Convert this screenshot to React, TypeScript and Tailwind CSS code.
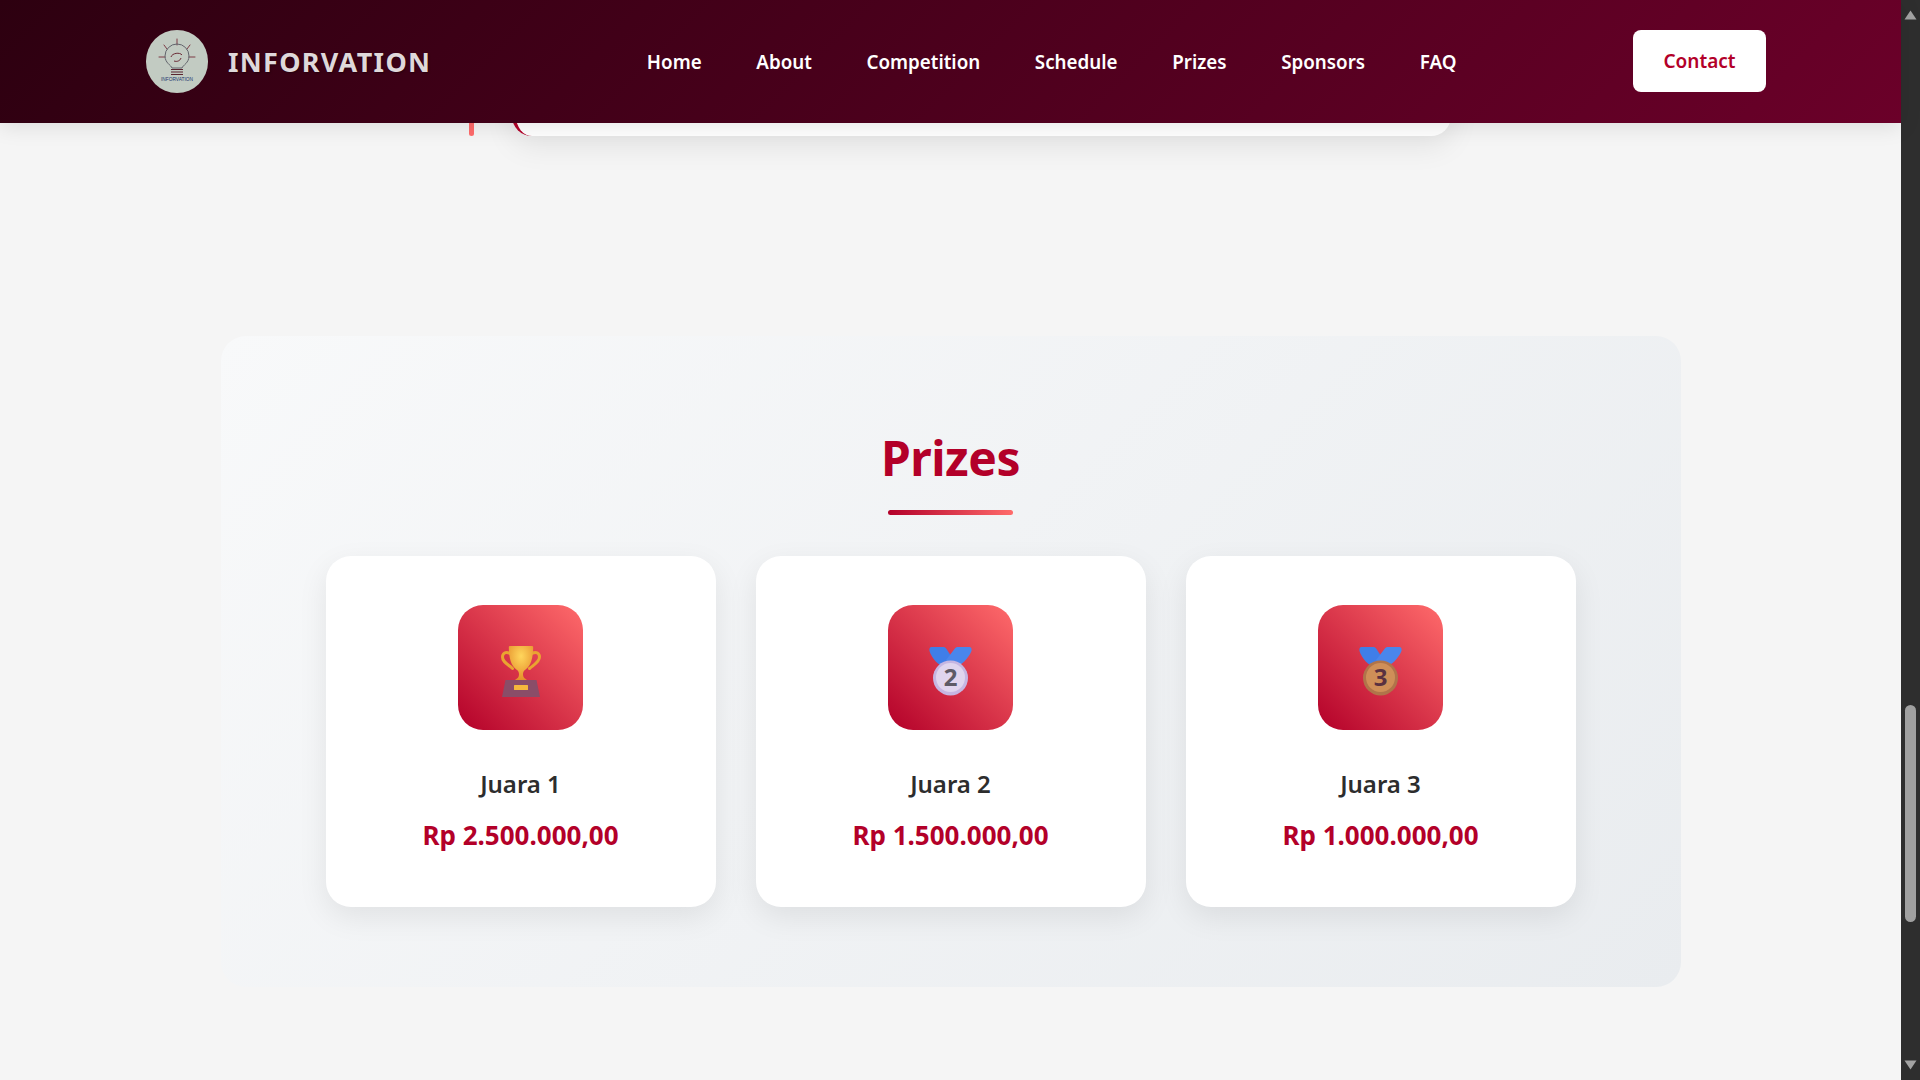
const font = "[font-family:'Noto_Sans','Open_Sans',sans-serif]";

function Logo() {
  return (
    <div className="w-[62px] h-[63px] rounded-full bg-[#c2cbc2] shrink-0 overflow-hidden">
      <svg viewBox="0 0 62 63" className="w-full h-full" fill="none">
        <g stroke="#7d3b45" strokeWidth="1" strokeLinecap="round">
          <path d="M31 9v6M18 15l3 4M44 15l-3 4M13 27h6M43 27h6" />
        </g>
        <path d="M26 38c-1-3-7-5-7-12a12 12 0 0 1 24 0c0 7-6 9-7 12z" stroke="#62646c" strokeWidth="1" />
        <path d="M25 27c1-4 9-5 11-2M28 31c3 1 6 0 7-3" stroke="#6b2a35" strokeWidth="1" />
        <path d="M25 39.500h12M25 42h12M25 44.500h12" stroke="#5a2530" strokeWidth="1.200" />
        <text x="31" y="50.500" textAnchor="middle" fontSize="4.800" fill="#24376e" fontFamily="Liberation Sans">INFORVATION</text>
      </svg>
    </div>
  );
}

function Trophy() {
  return (
    <svg viewBox="0 0 40 51" className="w-[40px] h-[51px]" fill="none">
      <defs>
        <radialGradient id="cup" cx="0.5" cy="0.3" r="0.7">
          <stop offset="0" stopColor="#ffd65c" />
          <stop offset="1" stopColor="#e58f2b" />
        </radialGradient>
      </defs>
      <path d="M9 7.500C4.500 5 1.500 7.500 1.500 11c0 5 5 7 10 11.500M31 7.500C35.500 5 38.500 7.500 38.500 11c0 5-6 8-10 11.500" stroke="#e9a431" strokeWidth="3" strokeLinecap="round" />
      <path d="M9 0h22c.8 0 1.200.5 1.200 1.500C32 12 30 20 24 24c-1.500 1-2 2.500-2 4.500 0 2.500 1.500 4 4 5.500H14c2.500-1.500 4-3 4-5.500 0-2-.5-3.500-2-4.500C10 20 8 12 7.800 1.500 7.800.5 8.200 0 9 0z" fill="url(#cup)" />
      <path d="M4.500 34h31L39 51H1z" fill="#8a4d68" />
      <rect x="13" y="39" width="14" height="5" rx="0.500" fill="#f5b83d" />
    </svg>
  );
}

function Medal({ n, fill, rim, ink }: { n: string; fill: string; rim: string; ink: string }) {
  return (
    <svg viewBox="0 0 43 50" className="w-[43px] h-[50px]" fill="none">
      <path d="M2.500 1H14c1.500 0 2.500.5 3.500 2L24 13l-7 9C9 19 3 13 .5 5 0 2.500 1 1 2.500 1z" fill="#3f7ee8" />
      <path d="M40.500 1H29c-1.500 0-2.500.5-3.500 2L17 14l7 8c9-3 15-9 18.500-17 .5-2.500-.5-4-2-4z" fill="#4a86ec" />
      <circle cx="21.500" cy="32" r="17.500" fill={rim} />
      <circle cx="21.500" cy="31.500" r="14.500" fill={fill} />
      <text x="21.500" y="40" textAnchor="middle" fontSize="24" fontWeight="700" fill={ink} fontFamily="Noto Sans">{n}</text>
    </svg>
  );
}

function PrizeCard({ title, amount, children }: { title: string; amount: string; children: React.ReactNode }) {
  return (
    <div className="h-[351px] rounded-[25px] bg-white shadow-[0_10px_30px_rgba(0,0,0,0.08)] flex flex-col items-center pt-[49px]">
      <div className="w-[125px] h-[125px] rounded-[25px] bg-[linear-gradient(45deg,#b30029,#ff6b6b)] flex items-center justify-center pt-[7px]">
        {children}
      </div>
      <h3 className="mt-[38px] text-[24px] leading-[32px] font-semibold text-[#2d2d2d]">{title}</h3>
      <p className="mt-[18px] text-[26px] leading-[34px] font-bold text-[#b30029]">{amount}</p>
    </div>
  );
}

function Triangle({ down }: { down?: boolean }) {
  return (
    <svg width="13" height="10" viewBox="0 0 13 10" className="block">
      <path d={down ? "M0.500 0.500h12L6.500 9.500z" : "M6.500 0.500l6 9H0.500z"} fill="#a3a3a3" />
    </svg>
  );
}

export default function App() {
  const links = ["Home", "About", "Competition", "Schedule", "Prizes", "Sponsors", "FAQ"];
  return (
    <div className={`${font} flex h-screen w-full overflow-hidden bg-[#f5f5f5]`}>
      <div className="flex-1 min-w-0 flex flex-col">
        <header className="relative z-10 h-[123px] shrink-0 bg-[linear-gradient(135deg,#2d0010,#6b0029)] shadow-[0_4px_20px_rgba(0,0,0,0.1)] pl-[146px] pr-[135px] flex items-center justify-between">
          <div className="flex items-center gap-[20px]">
            <Logo />
            <span className="text-[27px] leading-none font-bold tracking-[1.3px] text-[#dfd8da] mb-[1px] [text-shadow:1px_1px_2px_rgba(0,0,0,0.35)]">INFORVATION</span>
          </div>
          <nav className="flex items-center gap-[54.600px] ml-[39px] mt-[1px]">
            {links.map((l) => (
              <a key={l} className="text-[18.800px] font-semibold text-white whitespace-nowrap">{l}</a>
            ))}
          </nav>
          <button className="w-[133px] h-[62px] mb-[1px] pt-[1px] rounded-[8px] bg-white text-[#b30029] text-[19px] font-semibold">Contact</button>
        </header>

        <div className="flex h-[13px] shrink-0 pl-[469px] items-start">
          <div className="w-[5px] h-[13px] rounded-b-full bg-[#ff6b6b]" />
          <div className="ml-[38px] -mt-[47px] w-[939px] h-[60px] rounded-b-[20px] bg-white border-l-[4px] border-[#b30029] shadow-[0_10px_30px_rgba(0,0,0,0.08)]" />
        </div>

        <section className="mt-[200px] mx-auto w-[1460px] h-[651px] rounded-[25px] bg-[linear-gradient(135deg,#f8f9fa,#e9ecef)] px-[105px] pt-[84px]">
          <h2 className="text-center text-[48px] leading-[76px] font-bold text-[#b30029] tracking-[-0.5px]">Prizes</h2>
          <div className="mx-auto mt-[14px] w-[125px] h-[5px] rounded-full bg-[linear-gradient(90deg,#b30029,#ff6b6b)]" />
          <div className="mt-[41px] grid grid-cols-3 gap-[40px]">
            <PrizeCard title="Juara 1" amount="Rp 2.500.000,00"><Trophy /></PrizeCard>
            <PrizeCard title="Juara 2" amount="Rp 1.500.000,00">
              <Medal n="2" fill="#e0d5ee" rim="#c6b6e2" ink="#5e5a66" />
            </PrizeCard>
            <PrizeCard title="Juara 3" amount="Rp 1.000.000,00">
              <Medal n="3" fill="#cf8f58" rim="#b0744a" ink="#5a3140" />
            </PrizeCard>
          </div>
        </section>
      </div>

      <aside className="w-[19px] shrink-0 bg-[#2e2e2e] flex flex-col items-center py-[10px]">
        <Triangle />
        <div className="mt-[685px] w-[11px] h-[217px] rounded-full bg-[#a0a0a0]" />
        <div className="mt-auto"><Triangle down /></div>
      </aside>
    </div>
  );
}
